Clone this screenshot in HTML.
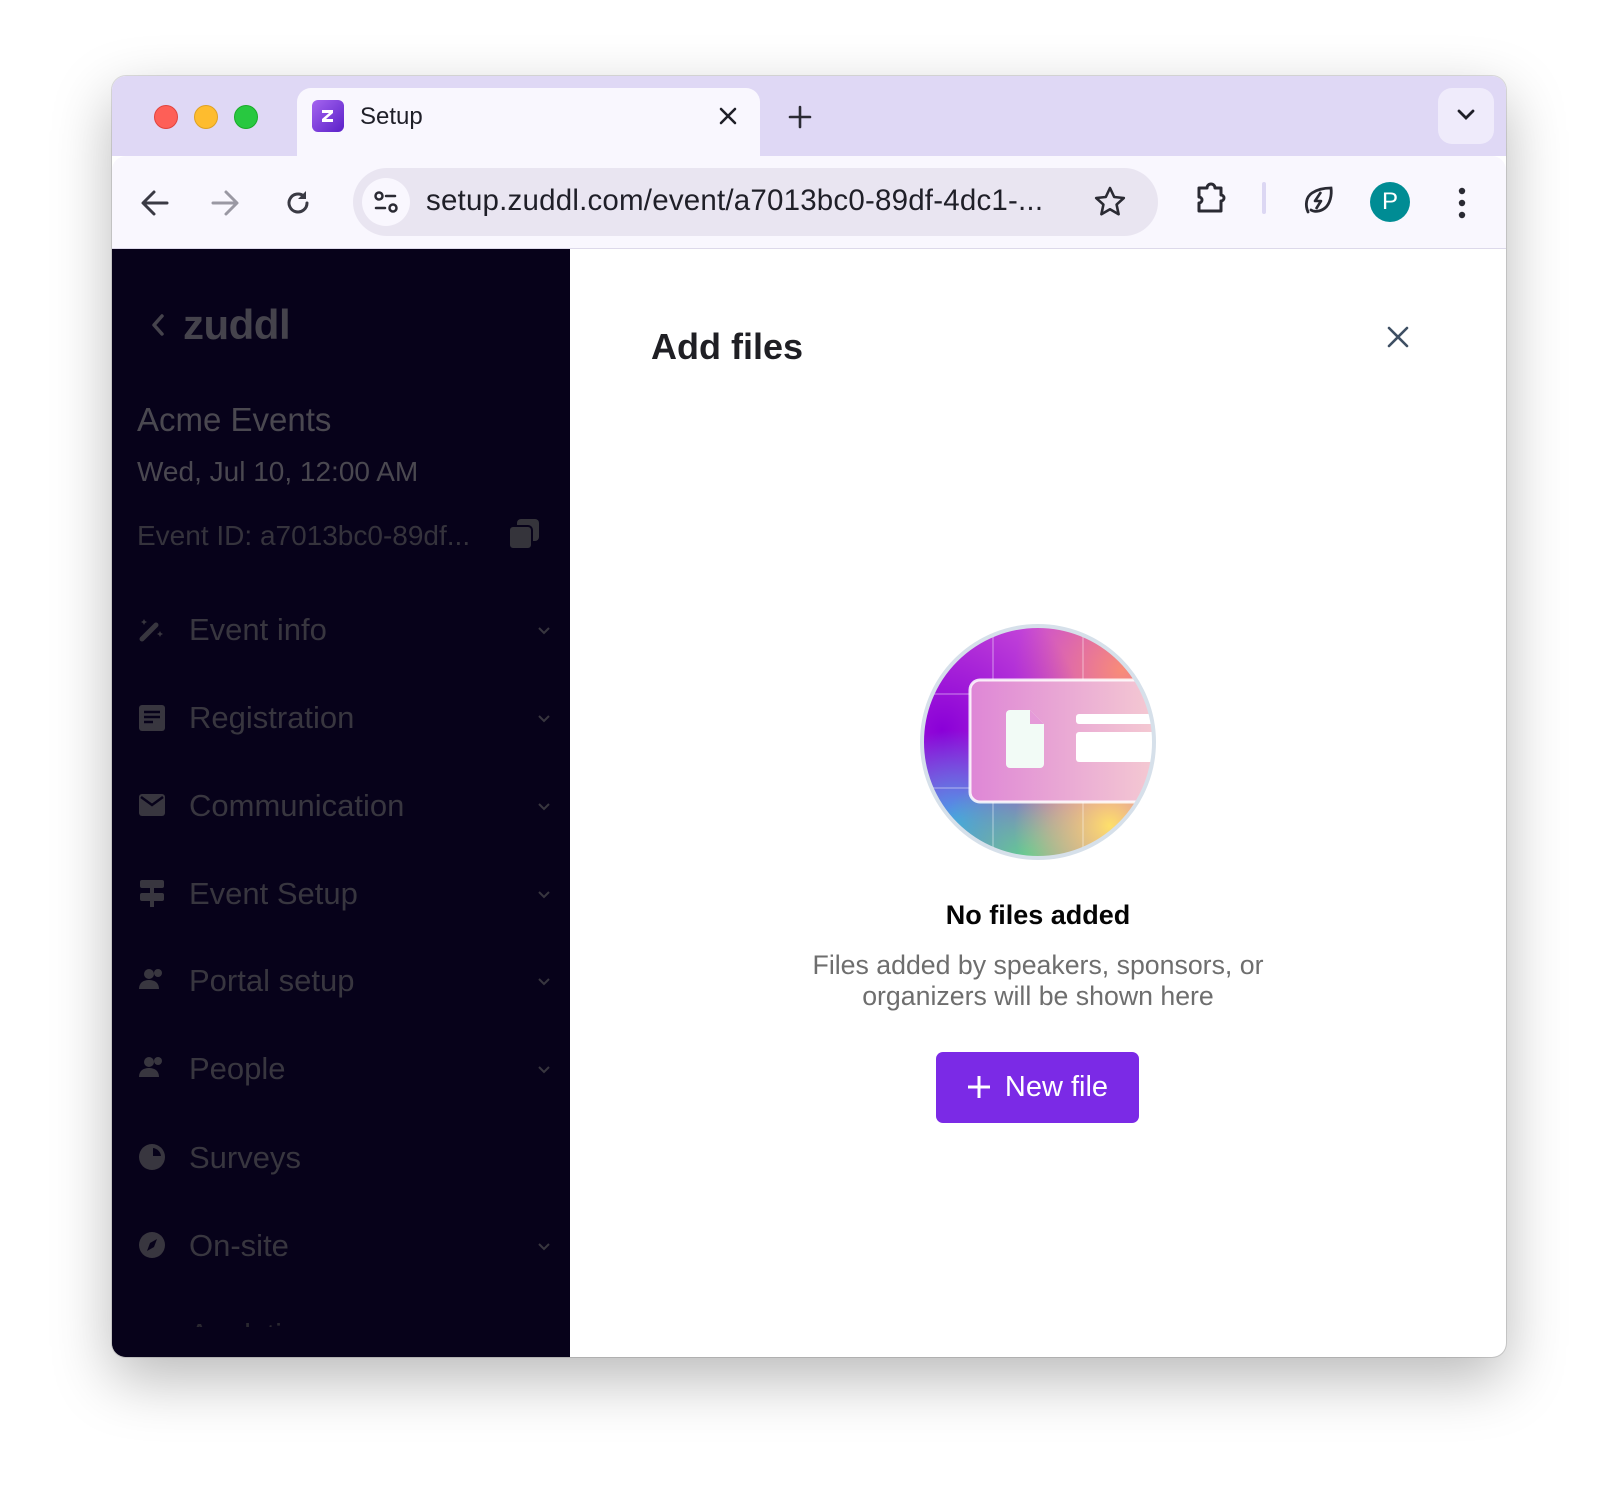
<!DOCTYPE html>
<html><head><meta charset="utf-8">
<style>
*{box-sizing:border-box;margin:0;padding:0}
body{width:1618px;height:1506px;background:#fff;font-family:"Liberation Sans",sans-serif;position:relative;overflow:hidden}
.win{position:absolute;left:112px;top:76px;width:1394px;height:1281px;border-radius:14px;overflow:hidden;background:#fff;box-shadow:0 22px 60px rgba(0,0,0,.28),0 0 0 1px rgba(0,0,0,.12)}
.tabbar{position:absolute;left:0;top:0;width:100%;height:80px;background:#dfd8f5}
.dot{position:absolute;top:29px;width:24px;height:24px;border-radius:50%}
.tab{position:absolute;left:185px;top:12px;width:463px;height:72px;background:#f9f7fe;border-radius:14px 14px 0 0}
.toolbar{position:absolute;left:0;top:80px;width:100%;height:93px;background:#f9f7fe;border-radius:14px 14px 0 0;border-bottom:1px solid #ddd9ea}
.url{position:absolute;left:241px;top:12px;width:805px;height:68px;border-radius:34px;background:#e9e5f1}
.side{position:absolute;left:0;top:173px;width:458px;height:1108px;background:#07021a;overflow:hidden}
.item{position:absolute;left:77px;font-size:31px;color:#38363f;line-height:1}
.ico{position:absolute;left:27px}
.chev{position:absolute;left:425px}
svg{display:block}
</style></head><body>
<div class="win">
 <div class="tabbar">
  <div class="dot" style="left:42px;background:#fe5f57;border:1px solid #e0443e"></div>
  <div class="dot" style="left:82px;background:#febc2e;border:1px solid #dea123"></div>
  <div class="dot" style="left:122px;background:#28c840;border:1px solid #1aab29"></div>
  <div class="tab">
   <div style="position:absolute;left:15px;top:12px;width:32px;height:32px;border-radius:6px;background:linear-gradient(135deg,#a565f0,#5a1fc8)">
    <svg width="32" height="32" viewBox="0 0 32 32"><path d="M10 10h11v3l-7 6h7v3H10v-3l7-6h-7z" fill="#fff"/></svg>
   </div>
   <div style="position:absolute;left:63px;top:15px;font-size:24px;color:#1f1f28">Setup</div>
   <svg style="position:absolute;left:420px;top:17px" width="22" height="22" viewBox="0 0 22 22"><path d="M4 4L18 18M18 4L4 18" stroke="#1f1f28" stroke-width="2.6" stroke-linecap="round"/></svg>
  </div>
  <svg style="position:absolute;left:676px;top:29px" width="24" height="24" viewBox="0 0 24 24"><path d="M12 2v20M2 12h20" stroke="#2a2a33" stroke-width="2.6" stroke-linecap="round"/></svg>
  <div style="position:absolute;left:1326px;top:12px;width:56px;height:56px;border-radius:14px;background:#efebfb">
   <svg style="position:absolute;left:18px;top:20px" width="20" height="14" viewBox="0 0 20 14"><path d="M3 3l7 7 7-7" stroke="#1f1f28" stroke-width="2.8" fill="none" stroke-linecap="round"/></svg>
  </div>
 </div>
 <div class="toolbar">
  <svg style="position:absolute;left:28px;top:33px" width="30" height="28" viewBox="0 0 30 28"><path d="M27 14H4M14 3L3 14l11 11" stroke="#3a3a44" stroke-width="3" fill="none" stroke-linecap="round" stroke-linejoin="round"/></svg>
  <svg style="position:absolute;left:98px;top:33px" width="30" height="28" viewBox="0 0 30 28"><path d="M3 14h23M16 3l11 11-11 11" stroke="#9a98a3" stroke-width="3" fill="none" stroke-linecap="round" stroke-linejoin="round"/></svg>
  <svg style="position:absolute;left:172px;top:33px" width="28" height="28" viewBox="0 0 28 28"><path d="M23 14a9 9 0 1 1-3-6.7" stroke="#3a3a44" stroke-width="3" fill="none" stroke-linecap="round"/><path d="M22 2v8h-8" fill="#3a3a44"/></svg>
  <div class="url">
   <div style="position:absolute;left:9px;top:10px;width:48px;height:48px;border-radius:50%;background:#f9f7fe">
    <svg width="48" height="48" viewBox="0 0 48 48"><circle cx="17" cy="18" r="3.5" stroke="#2a2a33" stroke-width="2.5" fill="none"/><path d="M24 18h9M14 30h9" stroke="#2a2a33" stroke-width="2.5" stroke-linecap="round"/><circle cx="31" cy="30" r="3.5" stroke="#2a2a33" stroke-width="2.5" fill="none"/></svg>
   </div>
   <div style="position:absolute;left:73px;top:16px;font-size:29.5px;color:#1f1f28;white-space:nowrap;letter-spacing:.2px">setup.zuddl.com/event/a7013bc0-89df-4dc1-...</div>
   <svg style="position:absolute;left:740px;top:17px" width="34" height="34" viewBox="0 0 34 34"><path d="M17 3l4.2 9 9.6 1-7.2 6.6 2 9.6L17 24.3 8.4 29.2l2-9.6L3.2 13l9.6-1z" stroke="#2a2a33" stroke-width="2.6" fill="none" stroke-linejoin="round"/></svg>
  </div>
  <svg style="position:absolute;left:1082px;top:24px" width="36" height="36" viewBox="0 0 36 36"><path d="M5 8h8a4 4 0 0 1 8 0h6v7a3 3 0 0 1 0 6v10H5v-8a3 3 0 0 0 0-6z" stroke="#2a2a33" stroke-width="3" fill="none" stroke-linejoin="round"/></svg>
  <div style="position:absolute;left:1150px;top:26px;width:4px;height:32px;border-radius:2px;background:#dcd7f3"></div>
  <svg style="position:absolute;left:1190px;top:27px" width="34" height="34" viewBox="0 0 34 34"><path d="M6 29c-3-7-2-15 4-19s14-5 19-5c1 7-1 16-6 20s-11 4-14 2" stroke="#2a2a33" stroke-width="2.8" fill="none" stroke-linecap="round"/><path d="M19 9l-6 9h6l-5 8" stroke="#2a2a33" stroke-width="2.6" fill="none" stroke-linejoin="round"/></svg>
  <div style="position:absolute;left:1258px;top:26px;width:40px;height:40px;border-radius:50%;background:#008c94;color:#fff;font-size:24px;text-align:center;line-height:40px">P</div>
  <svg style="position:absolute;left:1346px;top:30px" width="8" height="34" viewBox="0 0 8 34"><circle cx="4" cy="5" r="3.2" fill="#2a2a33"/><circle cx="4" cy="17" r="3.2" fill="#2a2a33"/><circle cx="4" cy="29" r="3.2" fill="#2a2a33"/></svg>
 </div>
 <div class="side">
  <svg style="position:absolute;left:38px;top:64px" width="16" height="24" viewBox="0 0 16 24"><path d="M12 3L4 12l8 9" stroke="#45434c" stroke-width="3.5" fill="none" stroke-linecap="round" stroke-linejoin="round"/></svg>
  <div style="position:absolute;left:71px;top:52px;font-size:42px;font-weight:bold;color:#45434c;letter-spacing:-0.5px">zuddl</div>
  <div style="position:absolute;left:25px;top:152px;font-size:33px;color:#4a4850">Acme Events</div>
  <div style="position:absolute;left:25px;top:207px;font-size:28px;color:#4a4850">Wed, Jul 10, 12:00 AM</div>
  <div style="position:absolute;left:25px;top:271px;font-size:28px;color:#35333c">Event ID: a7013bc0-89df...</div>
  <svg style="position:absolute;left:395px;top:268px" width="34" height="34" viewBox="0 0 34 34"><rect x="10" y="2" width="22" height="22" rx="4" fill="#35343b"/><rect x="2" y="9" width="23" height="23" rx="4" fill="#35343b" stroke="#07021a" stroke-width="2"/></svg>

  <div class="ico" style="top:367px"><svg width="26" height="26" viewBox="0 0 26 26"><path d="M3 23L17 9" stroke="#38363f" stroke-width="5" stroke-linecap="round"/><path d="M5 3l1 2 2 1-2 1-1 2-1-2-2-1 2-1zM21 15l1 2 2 1-2 1-1 2-1-2-2-1 2-1z" fill="#38363f"/></svg></div>
  <div class="item" style="top:365px">Event info</div>
  <div class="ico" style="top:456px"><svg width="26" height="26" viewBox="0 0 26 26"><rect x="0" y="0" width="26" height="26" rx="3" fill="#38363f"/><path d="M5 7h16M5 12h16M5 17h9" stroke="#07021a" stroke-width="2.5"/></svg></div>
  <div class="item" style="top:453px">Registration</div>
  <div class="ico" style="top:545px"><svg width="26" height="22" viewBox="0 0 26 22"><rect x="0" y="0" width="26" height="22" rx="3" fill="#38363f"/><path d="M2 3l11 8 11-8" stroke="#07021a" stroke-width="2.5" fill="none"/></svg></div>
  <div class="item" style="top:541px">Communication</div>
  <div class="ico" style="top:630px"><svg width="26" height="28" viewBox="0 0 26 28"><rect x="1" y="1" width="24" height="8" rx="2" fill="#38363f"/><rect x="1" y="14" width="24" height="8" rx="2" fill="#38363f"/><rect x="11" y="1" width="4" height="27" fill="#38363f"/></svg></div>
  <div class="item" style="top:629px">Event Setup</div>
  <div class="ico" style="top:718px"><svg width="26" height="24" viewBox="0 0 26 24"><circle cx="10" cy="7" r="5" fill="#38363f"/><path d="M0 22c0-6 4-9 10-9s10 3 10 9z" fill="#38363f"/><circle cx="19" cy="6" r="4" fill="#38363f"/></svg></div>
  <div class="item" style="top:716px">Portal setup</div>
  <div class="ico" style="top:806px"><svg width="26" height="24" viewBox="0 0 26 24"><circle cx="10" cy="7" r="5" fill="#38363f"/><path d="M0 22c0-6 4-9 10-9s10 3 10 9z" fill="#38363f"/><circle cx="19" cy="6" r="4" fill="#38363f"/></svg></div>
  <div class="item" style="top:804px">People</div>
  <div class="ico" style="top:895px"><svg width="26" height="26" viewBox="0 0 26 26"><circle cx="13" cy="13" r="13" fill="#38363f"/><path d="M14 4a9 9 0 0 1 8 8h-8z" fill="#07021a"/></svg></div>
  <div class="item" style="top:893px">Surveys</div>
  <div class="ico" style="top:983px"><svg width="26" height="26" viewBox="0 0 26 26"><circle cx="13" cy="13" r="13" fill="#38363f"/><path d="M18 7l-3 8-7 4 3-8z" fill="#07021a"/></svg></div>
  <div class="item" style="top:981px">On-site</div>
  <div class="item" style="top:1070px;color:#2a2830">Analytics</div>
  <div style="position:absolute;left:0;top:1078px;width:458px;height:60px;background:#07021a"></div>

  <svg class="chev" style="top:377px" width="14" height="10" viewBox="0 0 14 10"><path d="M2 2l5 5 5-5" stroke="#38363f" stroke-width="2" fill="none"/></svg>
  <svg class="chev" style="top:465px" width="14" height="10" viewBox="0 0 14 10"><path d="M2 2l5 5 5-5" stroke="#38363f" stroke-width="2" fill="none"/></svg>
  <svg class="chev" style="top:553px" width="14" height="10" viewBox="0 0 14 10"><path d="M2 2l5 5 5-5" stroke="#38363f" stroke-width="2" fill="none"/></svg>
  <svg class="chev" style="top:641px" width="14" height="10" viewBox="0 0 14 10"><path d="M2 2l5 5 5-5" stroke="#38363f" stroke-width="2" fill="none"/></svg>
  <svg class="chev" style="top:728px" width="14" height="10" viewBox="0 0 14 10"><path d="M2 2l5 5 5-5" stroke="#38363f" stroke-width="2" fill="none"/></svg>
  <svg class="chev" style="top:816px" width="14" height="10" viewBox="0 0 14 10"><path d="M2 2l5 5 5-5" stroke="#38363f" stroke-width="2" fill="none"/></svg>
  <svg class="chev" style="top:993px" width="14" height="10" viewBox="0 0 14 10"><path d="M2 2l5 5 5-5" stroke="#38363f" stroke-width="2" fill="none"/></svg>
 </div>

 <div style="position:absolute;left:539px;top:250px;font-size:36px;font-weight:bold;color:#1f1f24">Add files</div>
 <svg style="position:absolute;left:1274px;top:249px" width="24" height="24" viewBox="0 0 24 24"><path d="M3 3l18 18M21 3L3 21" stroke="#3e4f63" stroke-width="2.6" stroke-linecap="round"/></svg>

 <svg style="position:absolute;left:806px;top:546px" width="240" height="240" viewBox="0 0 240 240">
  <defs>
   <clipPath id="cc"><circle cx="120" cy="120" r="116"/></clipPath>
   <radialGradient id="g1" cx="0.1" cy="0.45" r="0.6"><stop offset="0" stop-color="#8a00d8"/><stop offset="1" stop-color="#8a00d8" stop-opacity="0"/></radialGradient>
   <radialGradient id="g2" cx="0.85" cy="0.2" r="0.45"><stop offset="0" stop-color="#f88c78"/><stop offset="1" stop-color="#f88c78" stop-opacity="0"/></radialGradient>
   <radialGradient id="g3" cx="0.8" cy="0.85" r="0.4"><stop offset="0" stop-color="#fde06a"/><stop offset="1" stop-color="#fde06a" stop-opacity="0"/></radialGradient>
   <radialGradient id="g4" cx="0.45" cy="1" r="0.4"><stop offset="0" stop-color="#5cd08e"/><stop offset="1" stop-color="#5cd08e" stop-opacity="0"/></radialGradient>
   <radialGradient id="g5" cx="0.15" cy="0.85" r="0.4"><stop offset="0" stop-color="#3fa6e8"/><stop offset="1" stop-color="#3fa6e8" stop-opacity="0"/></radialGradient>
   <linearGradient id="card" x1="0" x2="1"><stop offset="0" stop-color="#de86d6"/><stop offset="1" stop-color="#f6cfd2"/></linearGradient>
  </defs>
  <g clip-path="url(#cc)">
   <rect width="240" height="240" fill="#c84ad8"/>
   <rect width="240" height="240" fill="url(#g2)"/>
   <rect width="240" height="240" fill="url(#g1)"/>
   <rect width="240" height="240" fill="url(#g5)"/>
   <rect width="240" height="240" fill="url(#g4)"/>
   <rect width="240" height="240" fill="url(#g3)"/>
   <path d="M75 0v240M165 0v240M0 72h240M0 166h240" stroke="#fff" stroke-opacity=".25" stroke-width="2"/>
   <rect x="52" y="58" width="200" height="122" rx="10" fill="url(#card)" stroke="#fff" stroke-opacity=".85" stroke-width="3"/>
   <path d="M92 88h20l14 14v40a4 4 0 0 1-4 4H92a4 4 0 0 1-4-4V92a4 4 0 0 1 4-4z" fill="#f2fbf6"/>
   <path d="M112 88v14h14z" fill="#e59ad8"/>
   <rect x="158" y="92" width="90" height="10" rx="3" fill="#fff"/>
   <rect x="158" y="110" width="90" height="30" rx="3" fill="#fff"/>
  </g>
  <circle cx="120" cy="120" r="116" fill="none" stroke="#d6e0ea" stroke-width="4"/>
 </svg>

 <div style="position:absolute;left:500px;top:824px;width:852px;text-align:center;font-size:27px;font-weight:bold;color:#050505">No files added</div>
 <div style="position:absolute;left:500px;top:874px;width:852px;text-align:center;font-size:26.7px;line-height:31px;color:#6e6e6e">Files added by speakers, sponsors, or<br>organizers will be shown here</div>
 <div style="position:absolute;left:824px;top:976px;width:203px;height:71px;border-radius:7px;background:#7b2ae6;color:#fff;font-size:29px;line-height:71px;text-align:center">
  <svg style="display:inline-block;vertical-align:-3px;margin-right:14px" width="24" height="24" viewBox="0 0 24 24"><path d="M12 1v22M1 12h22" stroke="#fff" stroke-width="3"/></svg>New file</div>
</div>
</body></html>
